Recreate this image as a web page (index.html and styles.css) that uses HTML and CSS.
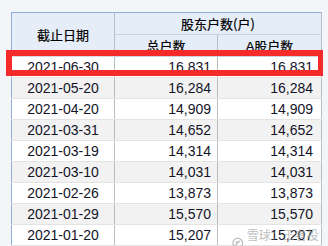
FILE: index.html
```html
<!DOCTYPE html>
<html lang="zh">
<head>
<meta charset="utf-8">
<link rel="stylesheet" href="styles.css">
</head>
<body>
<div class="page">
  <table class="grid">
    <colgroup>
      <col class="c-date">
      <col class="c-total">
      <col class="c-a">
    </colgroup>
    <thead>
      <tr class="h1">
        <th rowspan="2" class="h-date">截止日期</th>
        <th colspan="2" class="h-group">股东户数(户)</th>
      </tr>
      <tr class="h2">
        <th class="h-sub">总户数</th>
        <th class="h-sub">A股户数</th>
      </tr>
    </thead>
    <tbody>
      <tr><td class="d">2021-06-30</td><td class="n">16,831</td><td class="n n3">16,831</td></tr>
      <tr class="alt"><td class="d">2021-05-20</td><td class="n">16,284</td><td class="n n3">16,284</td></tr>
      <tr><td class="d">2021-04-20</td><td class="n">14,909</td><td class="n n3">14,909</td></tr>
      <tr class="alt"><td class="d">2021-03-31</td><td class="n">14,652</td><td class="n n3">14,652</td></tr>
      <tr><td class="d">2021-03-19</td><td class="n">14,314</td><td class="n n3">14,314</td></tr>
      <tr class="alt"><td class="d">2021-03-10</td><td class="n">14,031</td><td class="n n3">14,031</td></tr>
      <tr><td class="d">2021-02-26</td><td class="n">13,873</td><td class="n n3">13,873</td></tr>
      <tr class="alt"><td class="d">2021-01-29</td><td class="n">15,570</td><td class="n n3">15,570</td></tr>
      <tr><td class="d">2021-01-20</td><td class="n">15,207</td><td class="n n3">15,207</td></tr>
    </tbody>
  </table>
  <div class="highlight"></div>
  <div class="watermark">
    <svg class="wm-logo" width="12" height="12" viewBox="0 0 12 12"><circle cx="6" cy="6" r="5" fill="none" stroke="#aaa" stroke-width="1.2"/><path d="M3.5 8.5 L8.5 3.5 M4 6 L6 4" stroke="#aaa" stroke-width="1.2" fill="none"/></svg>
    <span>雪球：王者投资</span>
  </div>
</div>
</body>
</html>
```
FILE: styles.css
```css
html, body {
  margin: 0;
  padding: 0;
  background: #f3f5f9;
}
body {
  font-family: "Liberation Sans", "Noto Sans CJK SC", sans-serif;
  color: #111;
  overflow: hidden;
}
.page {
  position: relative;
  width: 328px;
  height: 246px;
  padding: 12px 0 0 11px;
  box-sizing: border-box;
}
.grid {
  border-collapse: collapse;
  table-layout: fixed;
  width: 310px;
  background: #fff;
  border-left: 1px solid #8fb0dd;
  border-top: 1px solid #8fb0dd;
}
.c-date { width: 103px; }
.c-total { width: 103px; }
.c-a { width: 104px; }
th {
  background: #e5edf8;
  font-weight: normal;
  font-size: 13px;
  font-family: "Noto Sans CJK SC", "Liberation Sans", sans-serif;
  color: #000;
  padding: 0;
  border-right: 1px solid #b9bec6;
  border-bottom: 1px solid #c9d3e2;
  text-align: center;
  vertical-align: middle;
  -webkit-text-stroke: 0.2px #000;
}
.h1 th, .h2 th { height: 21px; }
.h-date { border-bottom: 1px solid #d6dbe3; }
.h-sub {
  font-family: "Liberation Sans", "Noto Sans CJK SC", sans-serif;
}
td {
  height: 20px;
  padding: 0;
  font-size: 14px;
  border-right: 1px solid #b9bec6;
  border-bottom: 1px solid #e3e3e3;
  vertical-align: middle;
  color: #141428;
}
tr.alt td { background: #f2f2f2; }
.d { text-align: center; }
.n { text-align: right; padding-right: 6px; }
.n3 { padding-right: 8px; }
.highlight {
  position: absolute;
  left: 6px;
  top: 50px;
  width: 317px;
  height: 26px;
  box-sizing: border-box;
  border: 6px solid #f52a2a;
  border-right-width: 5px;
}
.watermark {
  position: absolute;
  left: 232px;
  top: 226px;
  display: flex;
  align-items: center;
  gap: 3px;
  font-family: "Noto Sans CJK SC", sans-serif;
  font-size: 12px;
  color: rgba(160, 160, 160, 0.7);
}
.wm-logo { opacity: 0.8; }
```
